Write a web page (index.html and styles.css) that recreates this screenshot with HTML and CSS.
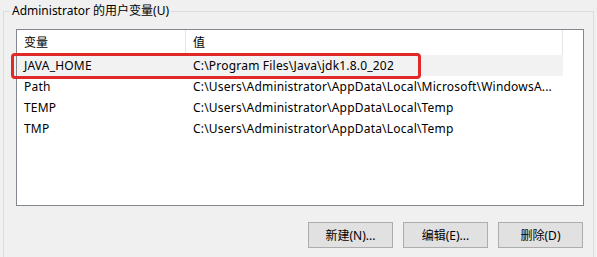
FILE: index.html
```html
<!DOCTYPE html>
<html lang="zh-CN">
<head>
<meta charset="utf-8">
<title>用户变量</title>
<link rel="stylesheet" href="styles.css">
</head>
<body>
<fieldset class="group">
  <legend class="group-title">Administrator 的用户变量(U)</legend>
  <div class="listview">
    <div class="row header">
      <div class="cell c1">变量</div>
      <div class="cell c2">值</div>
      <div class="filler"></div>
    </div>
    <div class="row selected">
      <div class="cell c1">JAVA_HOME</div>
      <div class="cell c2">C:\Program Files\Java\jdk1.8.0_202</div>
    </div>
    <div class="row">
      <div class="cell c1">Path</div>
      <div class="cell c2">C:\Users\Administrator\AppData\Local\Microsoft\WindowsA...</div>
    </div>
    <div class="row">
      <div class="cell c1">TEMP</div>
      <div class="cell c2">C:\Users\Administrator\AppData\Local\Temp</div>
    </div>
    <div class="row">
      <div class="cell c1">TMP</div>
      <div class="cell c2">C:\Users\Administrator\AppData\Local\Temp</div>
    </div>
  </div>
  <div class="buttons">
    <button class="btn">新建(N)...</button>
    <button class="btn">编辑(E)...</button>
    <button class="btn">删除(D)</button>
  </div>
</fieldset>
<div class="highlight-box"></div>
</body>
</html>
```
FILE: styles.css
```css
html, body {
  margin: 0;
  padding: 0;
}
body {
  width: 597px;
  height: 257px;
  overflow: hidden;
  background: #f0f0f0;
  font-family: "Noto Sans", "Noto Sans CJK SC", sans-serif;
  font-size: 12px;
  color: #000;
  position: relative;
}
.group {
  margin: 3px 3px 0 3px;
  padding: 0 0 20px 0;
  border: 1px solid #dcdcdc;
  min-width: 0;
}
.group-title {
  margin-left: 6px;
  padding: 0 2px;
  line-height: 16px;
  height: 16px;
}
.listview {
  margin: 10px 0 0 12px;
  width: 566px;
  height: 175px;
  border: 1px solid #828790;
  background: #fff;
}
.row {
  display: flex;
  height: 21px;
  align-items: center;
  white-space: nowrap;
  letter-spacing: 0.2px;
}
.header {
  height: 25px;
  align-items: stretch;
  letter-spacing: 0;
}
.header .cell {
  display: flex;
  align-items: center;
  border-right: 1px solid #e5e5e5;
  padding-bottom: 1px;
}
.cell {
  padding-left: 7px;
  box-sizing: border-box;
  overflow: hidden;
}
.c1 { width: 169px; }
.c2 { width: 377px; }
.filler { flex: 1; }
.selected .cell {
  background: #f2f2f2;
  height: 100%;
  display: flex;
  align-items: center;
}
.buttons {
  display: flex;
  justify-content: flex-end;
  gap: 10px;
  margin: 16px 10px 0 0;
}
.btn {
  width: 85px;
  height: 26px;
  padding: 0;
  background: #e1e1e1;
  border: 1px solid #adadad;
  font-family: inherit;
  font-size: 12px;
  color: #000;
}
.highlight-box {
  position: absolute;
  left: 11px;
  top: 53px;
  width: 410px;
  height: 26px;
  box-sizing: border-box;
  border: 3px solid #e02a2a;
  border-radius: 4px;
}
```
